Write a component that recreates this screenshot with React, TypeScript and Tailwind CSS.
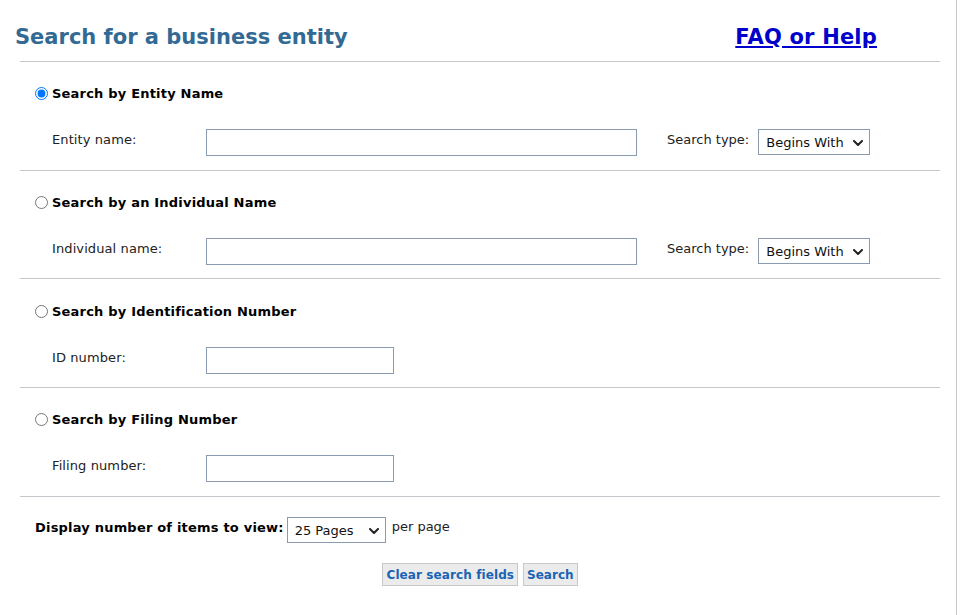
import React, { useState } from "react";

const font = { fontFamily: '"DejaVu Sans", Verdana, sans-serif' };

function Chevron() {
    return (
        <svg viewBox="0 0 10 6" className="w-[10px] h-[6px]" aria-hidden>
            <path d="M1 1l4 4 4-4" fill="none" stroke="#222" strokeWidth="2" strokeLinecap="round" strokeLinejoin="round" />
        </svg>
    );
}

function SelectBox({ value, width }: { value: string; width: string }) {
    return (
        <div className={`relative ${width} h-[26px] border border-[#8a9bb0] bg-white flex items-center pl-[7px] text-[13px] text-[#111]`}>
            <span className="mt-[2px]">{value}</span>
            <span className="absolute right-[6px] top-[10px]">
                <Chevron />
            </span>
        </div>
    );
}

interface SectionProps {
    id: string;
    title: string;
    label: string;
    checked: boolean;
    onPick: () => void;
    wide?: boolean;
    box: string;
}

function Section({ id, title, label, checked, onPick, wide, box }: SectionProps) {
    return (
        <div className={`border-b border-[#c4c8cc] ${box}`}>
            <label className="flex items-center gap-[4px] pl-[15px] cursor-pointer">
                <input type="radio" name="searchBy" id={id} checked={checked} onChange={onPick} className="w-[13px] h-[13px] m-0 accent-[#0075ff]" />
                <span className="text-[13px] font-bold text-black tracking-[0.2px]">{title}</span>
            </label>
            <div className="flex items-start mt-[25px]">
                <span className="w-[186px] pl-[32px] text-[13px] text-[#222] pt-[1px] tracking-[0.1px]">{label}</span>
                <input className={`${wide ? "w-[431px]" : "w-[188px]"} h-[27px] border border-[#8a9bb0] bg-white outline-none px-1`} />
                {wide && (
                    <div className="flex items-start ml-[30px]">
                        <span className="text-[13px] text-[#222] mr-[9px] pt-[1px]">Search type:</span>
                        <SelectBox value="Begins With" width="w-[112px]" />
                    </div>
                )}
            </div>
        </div>
    );
}

export default function App() {
    const [pick, setPick] = useState("entity");

    return (
        <div className="w-[957px] min-h-[615px] bg-white border-r border-[#c8c8c8]" style={font}>
            <div className="flex items-end justify-between pl-[15px] pr-[79px] pt-[22px] pb-[9px]">
                <h1 className="text-[21px] font-bold text-[#336a94] leading-[30px]">Search for a business entity</h1>
                <a href="#" className="text-[21px] font-bold text-[#0000cc] underline leading-[30px] tracking-[0.2px]">FAQ or Help</a>
            </div>
            <div className="mx-[20px] w-[920px] border-t border-[#c4c8cc]">
                <Section id="r1" box="h-[109px] pt-[22px]" title="Search by Entity Name" label="Entity name:" checked={pick === "entity"} onPick={() => setPick("entity")} wide />
                <Section id="r2" box="h-[108px] pt-[22px]" title="Search by an Individual Name" label="Individual name:" checked={pick === "indiv"} onPick={() => setPick("indiv")} wide />
                <Section id="r3" box="h-[109px] pt-[23px]" title="Search by Identification Number" label="ID number:" checked={pick === "id"} onPick={() => setPick("id")} />
                <Section id="r4" box="h-[109px] pt-[22px]" title="Search by Filing Number" label="Filing number:" checked={pick === "filing"} onPick={() => setPick("filing")} />
                <div className="flex items-start pt-[20px] pl-[15px]">
                    <span className="text-[13px] font-bold text-black pt-[1px] mr-[3px] tracking-[0.2px]">Display number of items to view:</span>
                    <SelectBox value="25 Pages" width="w-[99px]" />
                    <span className="text-[13px] text-[#222] ml-[6px]">per page</span>
                </div>
                <div className="flex justify-center gap-[5px] mt-[20px]">
                    <button className="h-[23px] px-[3px] bg-[#ebebeb] border border-[#c8c8c8] text-[12px] font-bold text-[#1a64b4] tracking-[0.1px]">Clear search fields</button>
                    <button className="h-[23px] px-[3px] bg-[#ebebeb] border border-[#c8c8c8] text-[12px] font-bold text-[#1a64b4]">Search</button>
                </div>
            </div>
        </div>
    );
}
